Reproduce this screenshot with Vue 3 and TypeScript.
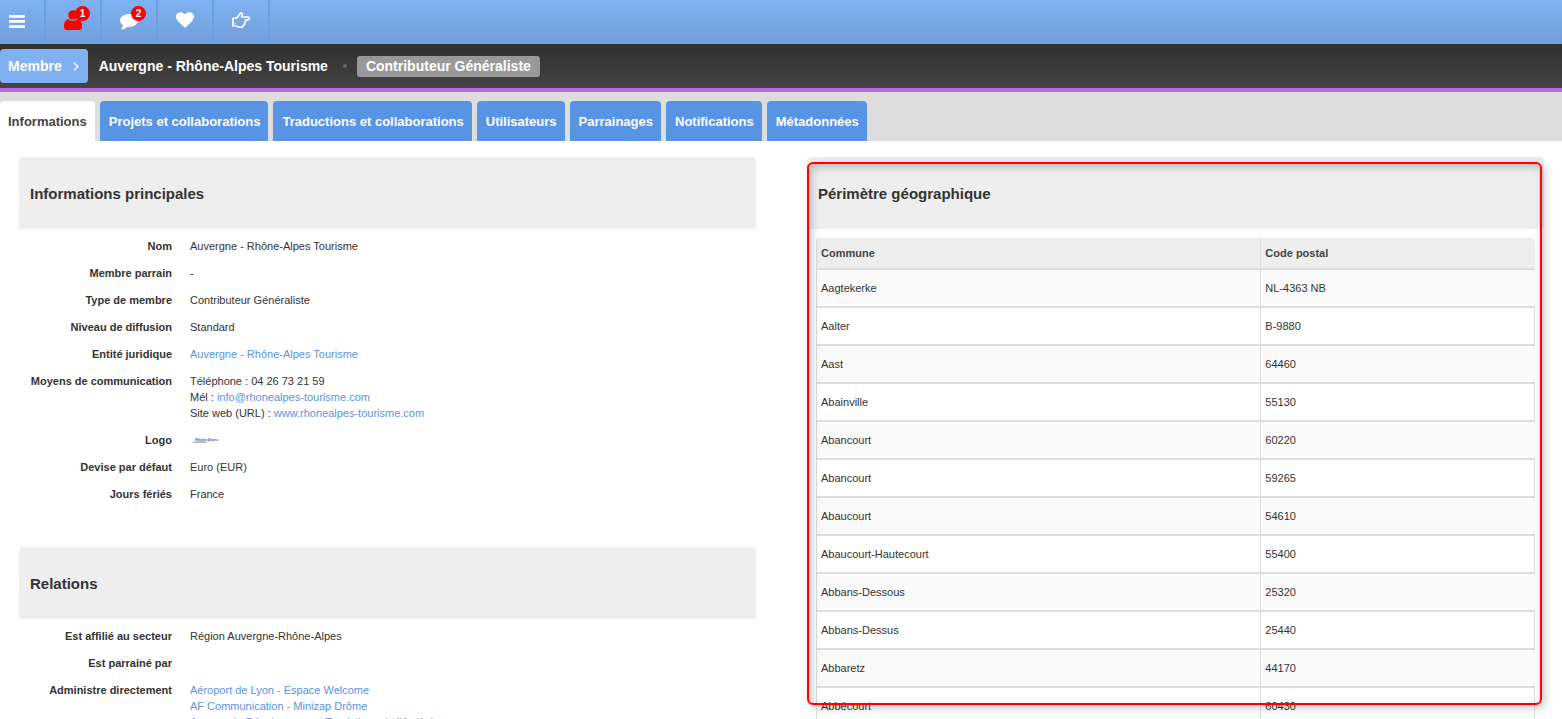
<script setup lang="ts">
const tabs: string[] = [
  'Informations',
  'Projets et collaborations',
  'Traductions et collaborations',
  'Utilisateurs',
  'Parrainages',
  'Notifications',
  'Métadonnées',
]

const communes: [string, string][] = [
  ['Aagtekerke', 'NL-4363 NB'],
  ['Aalter', 'B-9880'],
  ['Aast', '64460'],
  ['Abainville', '55130'],
  ['Abancourt', '60220'],
  ['Abancourt', '59265'],
  ['Abaucourt', '54610'],
  ['Abaucourt-Hautecourt', '55400'],
  ['Abbans-Dessous', '25320'],
  ['Abbans-Dessus', '25440'],
  ['Abbaretz', '44170'],
  ['Abbécourt', '60430'],
]

const managed: string[] = [
  'Aéroport de Lyon - Espace Welcome',
  'AF Communication - Minizap Drôme',
  "Agence de Développement Touristique de l'Ardèche",
]
</script>

<template>
  <div class="page">
    <nav class="toolbar" aria-label="Barre d'outils">
      <button class="tool menu" type="button" aria-label="Menu">
        <svg width="16" height="13" viewBox="0 0 16 13" fill="#fff">
          <rect width="16" height="2.700" rx="0.6" />
          <rect y="5.100" width="16" height="2.700" rx="0.6" />
          <rect y="10.200" width="16" height="2.700" rx="0.6" />
        </svg>
      </button>
      <button class="tool" type="button" aria-label="Membres">
        <span class="glyph">
          <svg width="18" height="20" viewBox="0 0 18 20" fill="#f00">
            <circle cx="9" cy="5" r="4.800" />
            <path d="M4.300 9Q6.600 10.900 9 10.900T13.700 9Q18 9.800 18 16.500Q18 20 15.200 20H2.800Q0 20 0 16.500Q0 9.800 4.300 9Z" />
          </svg>
          <span class="badge">1</span>
        </span>
      </button>
      <button class="tool" type="button" aria-label="Messages">
        <span class="glyph">
          <svg class="comment" width="18" height="16" viewBox="0 0 18 16" fill="#fff">
            <path d="M9 0C14 0 18 3 18 6.500S14 13 9 13Q8 13 7.200 12.900Q5 15 1.600 15.600Q1 15.600 1.200 15Q2.700 13.500 2.900 11.300Q0 9.500 0 6.500C0 3 4 0 9 0Z" />
          </svg>
          <span class="badge">2</span>
        </span>
      </button>
      <button class="tool" type="button" aria-label="Favoris">
        <svg width="18" height="16" viewBox="0 128 1792 1536" fill="#fff">
          <path d="M896 1664q-26 0-44-18l-624-602q-10-8-27.500-26T145 952.500 77 855 23.500 734 0 596q0-220 127-344t351-124q62 0 126.500 21.500t120 58T820 276t76 68q36-36 76-68t95.500-68.500 120-58T1314 128q224 0 351 124t127 344q0 221-229 450l-623 600q-18 18-44 18z" />
        </svg>
      </button>
      <button class="tool" type="button" aria-label="Accès rapides">
        <svg width="18" height="16" viewBox="0 0 18 16" fill="none" stroke="#fff" stroke-width="1.700" stroke-linejoin="round">
          <path d="M1 6H4.500C6 5.600 7 3 8 1.500C9 .5 10.600 1.200 10.300 3C10.200 3.800 9.600 4.600 9.600 5H16C17.600 5 17.600 7.900 16 7.900H12.900M12.900 7.900C14 9 13.500 10.400 12.500 10.700C13 12 12.500 13 11.400 13.200C11.500 14.700 10.500 15.200 9.300 15.200H7.500C5.800 15.200 5 14 4 14H1V6" />
          <circle cx="3.200" cy="11.800" r=".3" stroke-width=".9" />
        </svg>
      </button>
    </nav>

    <header class="title-bar">
      <button class="kind" type="button">
        Membre
        <svg width="6" height="9" viewBox="0 0 6 9" fill="none" stroke="#fff" stroke-width="1.500"><path d="M1 .7L4.800 4.500L1 8.300" /></svg>
      </button>
      <h1>Auvergne - Rhône-Alpes Tourisme</h1>
      <span class="dot"></span>
      <span class="role">Contributeur Généraliste</span>
    </header>

    <div class="tabs" role="tablist">
      <button v-for="(tab, i) in tabs" :key="tab" class="tab" :class="{ active: i === 0 }" type="button" role="tab" :aria-selected="i === 0">{{ tab }}</button>
    </div>

    <main class="content">
      <div class="column">
        <section>
          <h2>Informations principales</h2>
          <dl>
            <dt>Nom</dt><dd>Auvergne - Rhône-Alpes Tourisme</dd>
            <dt>Membre parrain</dt><dd>-</dd>
            <dt>Type de membre</dt><dd>Contributeur Généraliste</dd>
            <dt>Niveau de diffusion</dt><dd>Standard</dd>
            <dt>Entité juridique</dt><dd><a href="#">Auvergne - Rhône-Alpes Tourisme</a></dd>
            <dt>Moyens de communication</dt>
            <dd>
              <div>Téléphone : 04 26 73 21 59</div>
              <div>Mél : <a href="#">info@rhonealpes-tourisme.com</a></div>
              <div>Site web (URL) : <a href="#">www.rhonealpes-tourisme.com</a></div>
            </dd>
            <dt>Logo</dt>
            <dd class="logo">
              <svg width="30" height="10" viewBox="0 0 30 10" role="img" aria-label="Rhône-Alpes">
                <path d="M1 8Q6 4.500 17 6.500V8Z" fill="#b9bec6" />
                <text x="5" y="6" font-size="4" font-weight="bold" font-style="italic" fill="#4a72ad">RhôneAlpes</text>
              </svg>
            </dd>
            <dt>Devise par défaut</dt><dd>Euro (EUR)</dd>
            <dt>Jours fériés</dt><dd>France</dd>
          </dl>
        </section>
        <section>
          <h2>Relations</h2>
          <dl>
            <dt>Est affilié au secteur</dt><dd>Région Auvergne-Rhône-Alpes</dd>
            <dt>Est parrainé par</dt><dd></dd>
            <dt>Administre directement</dt>
            <dd><div v-for="name in managed" :key="name"><a href="#">{{ name }}</a></div></dd>
          </dl>
        </section>
      </div>

      <section class="perimeter">
        <h2>Périmètre géographique</h2>
        <table>
          <thead>
            <tr><th scope="col">Commune</th><th scope="col">Code postal</th></tr>
          </thead>
          <tbody>
            <tr v-for="[name, code] in communes" :key="code"><td>{{ name }}</td><td>{{ code }}</td></tr>
          </tbody>
        </table>
        <div class="highlight"></div>
      </section>
    </main>
  </div>
</template>

<style>
body { margin: 0; }
</style>

<style scoped>
.page {
  height: 100vh;
  overflow: hidden;
  background: #fff;
  color: #333;
  font: 11px/16px "Liberation Sans", Arial, sans-serif;
}
button { border: 0; margin: 0; font: inherit; cursor: pointer; }
.toolbar {
  display: flex;
  height: 44px;
  background: linear-gradient(#80b1f3, #6f9fd9);
}
.tool {
  box-sizing: border-box;
  display: flex;
  align-items: center;
  justify-content: center;
  width: 56px;
  padding: 0 0 4px;
  border-right: 2px solid #6a9fe6;
  background: none;
}
.tool.menu { width: 46px; padding: 0 10px 2px 0; }
.glyph { position: relative; display: flex; }
.comment { margin-top: 4px; }
.badge {
  position: absolute;
  top: -4px;
  right: -8px;
  width: 15px;
  height: 15px;
  border-radius: 50%;
  background: #f00;
  color: #fff;
  font-size: 10px;
  font-weight: bold;
  line-height: 15px;
  text-align: center;
}
.title-bar {
  display: flex;
  align-items: center;
  height: 44px;
  border-bottom: 4px solid #b968db;
  background: linear-gradient(#303030, #444);
  color: #fff;
}
.kind {
  display: flex;
  align-items: center;
  gap: 11px;
  height: 34px;
  padding: 0 9px 0 8px;
  border-radius: 4px;
  background: #80b1f3;
  color: #fff;
  font-size: 14px;
  font-weight: bold;
}
h1 { margin: 0 0 0 11px; font-size: 14px; }
.dot { width: 4px; height: 4px; margin: 0 10px 0 15px; border-radius: 50%; background: #666; }
.role {
  padding: 0 9px;
  border-radius: 3px;
  background: #999;
  font-size: 14px;
  font-weight: bold;
  line-height: 21px;
}
.tabs { display: flex; gap: 5px; padding-top: 9px; background: #ddd; }
.tab {
  height: 40px;
  padding: 2px 8px 0 9px;
  border-radius: 4px 4px 0 0;
  background: #5894e4;
  color: #fff;
  font-size: 13px;
  font-weight: bold;
}
.tab.active { padding-left: 8px; background: #fff; color: #444; }
.content {
  display: grid;
  grid-template-columns: 1fr 1fr;
  gap: 51px;
  padding: 16px 18px 0 19px;
}
h2 {
  margin: 0;
  padding: 2px 11px 0;
  border-radius: 4px 4px 0 0;
  background: #eee;
  font-size: 15px;
  line-height: 70px;
}
dl {
  display: grid;
  grid-template-columns: 153px 1fr;
  gap: 11px 18px;
  margin: 0 0 45px;
  padding-top: 9px;
}
dt { font-weight: bold; text-align: right; }
dd { margin: 0; min-height: 16px; }
.logo { display: flex; align-items: center; }
a { color: #5b92e5; text-decoration: none; }
.perimeter { position: relative; }
table {
  width: calc(100% - 18px);
  margin: 9px 9px 0;
  border-collapse: separate;
  border-spacing: 0;
  table-layout: fixed;
}
th, td {
  box-sizing: border-box;
  padding: 0 4px;
  border-left: 1px solid #ddd;
  border-bottom: 2px solid #ddd;
  text-align: left;
}
th { height: 32px; background: #eee; color: #444; }
th:first-child { width: 61.8%; border-top-left-radius: 4px; }
th:last-child { border-top-right-radius: 4px; }
td { height: 38px; }
tbody tr:nth-child(odd) { background: #fafafa; }
tbody tr:nth-child(even) td:last-child { border-right: 1px solid #ddd; }
.highlight {
  position: absolute;
  top: 5px;
  left: 0;
  right: 2px;
  height: 539px;
  border: 2px solid #f00;
  border-radius: 6px;
  box-shadow: 3px 3px 9px rgba(0, 0, 0, 0.22), inset 3px 3px 9px rgba(0, 0, 0, 0.22);
  pointer-events: none;
}
</style>
